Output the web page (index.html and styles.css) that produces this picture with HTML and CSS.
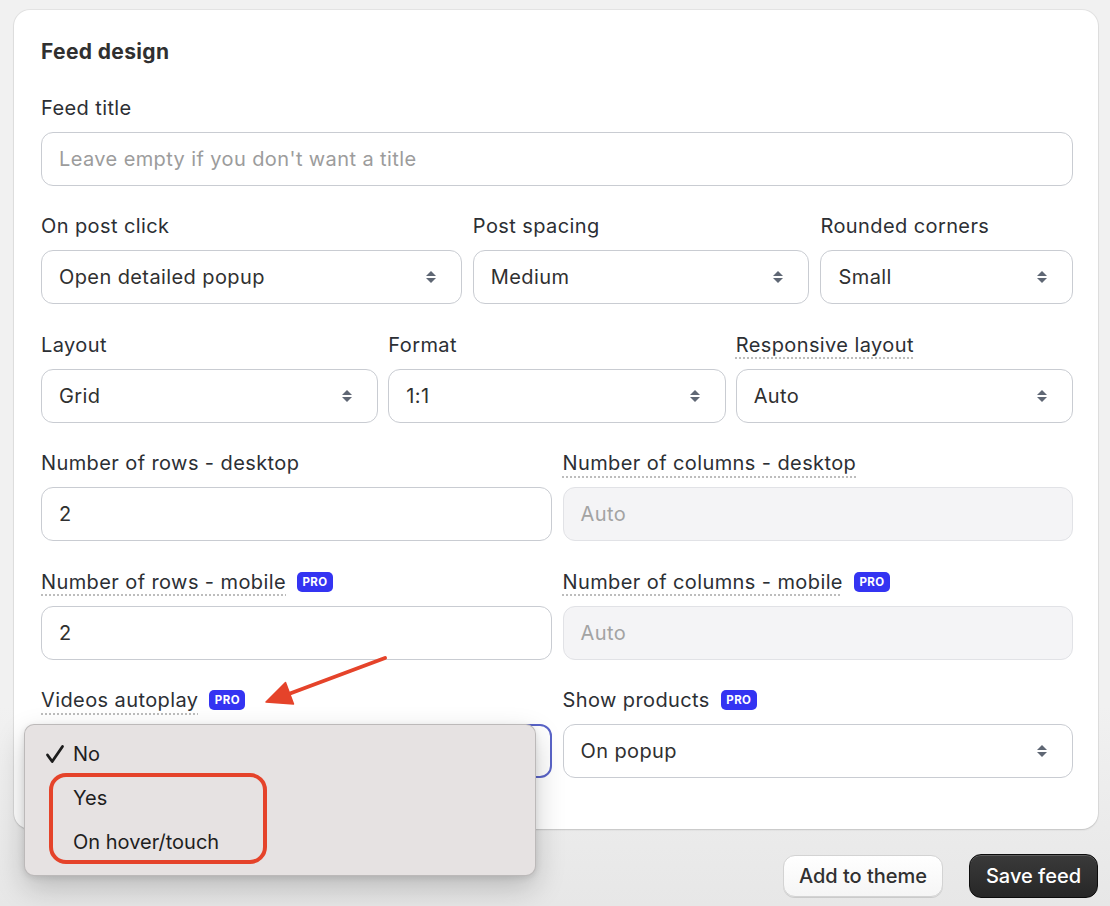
FILE: index.html
```html
<!DOCTYPE html>
<html lang="en">
<head>
<meta charset="utf-8">
<title>Feed design</title>
<link rel="stylesheet" href="styles.css">
</head>
<body>
<div class="page">
  <section class="card">
    <h2 class="card-title">Feed design</h2>

    <div class="field">
      <label class="label"><span class="label-text">Feed title</span></label>
      <div class="input placeholder">Leave empty if you don't want a title</div>
    </div>

    <div class="row row-543">
      <div class="field">
        <label class="label"><span class="label-text">On post click</span></label>
        <div class="input select">Open detailed popup<span class="caret"></span></div>
      </div>
      <div class="field">
        <label class="label"><span class="label-text">Post spacing</span></label>
        <div class="input select">Medium<span class="caret"></span></div>
      </div>
      <div class="field">
        <label class="label"><span class="label-text">Rounded corners</span></label>
        <div class="input select">Small<span class="caret"></span></div>
      </div>
    </div>

    <div class="row row-3">
      <div class="field">
        <label class="label"><span class="label-text">Layout</span></label>
        <div class="input select">Grid<span class="caret"></span></div>
      </div>
      <div class="field">
        <label class="label"><span class="label-text">Format</span></label>
        <div class="input select">1:1<span class="caret"></span></div>
      </div>
      <div class="field">
        <label class="label"><span class="label-text tip">Responsive layout</span></label>
        <div class="input select">Auto<span class="caret"></span></div>
      </div>
    </div>

    <div class="row row-2">
      <div class="field">
        <label class="label"><span class="label-text">Number of rows - desktop</span></label>
        <div class="input">2</div>
      </div>
      <div class="field">
        <label class="label"><span class="label-text tip">Number of columns - desktop</span></label>
        <div class="input disabled">Auto</div>
      </div>
    </div>

    <div class="row row-2">
      <div class="field">
        <label class="label"><span class="label-text tip">Number of rows - mobile</span><span class="pro">PRO</span></label>
        <div class="input">2</div>
      </div>
      <div class="field">
        <label class="label"><span class="label-text tip">Number of columns - mobile</span><span class="pro">PRO</span></label>
        <div class="input disabled">Auto</div>
      </div>
    </div>

    <div class="row row-2">
      <div class="field">
        <label class="label"><span class="label-text tip">Videos autoplay</span><span class="pro">PRO</span></label>
        <div class="input select focused"><span class="caret"></span></div>
      </div>
      <div class="field">
        <label class="label"><span class="label-text">Show products</span><span class="pro">PRO</span></label>
        <div class="input select">On popup<span class="caret"></span></div>
      </div>
    </div>
  </section>

  <div class="actions">
    <button class="btn btn-secondary">Add to theme</button>
    <button class="btn btn-primary">Save feed</button>
  </div>

  <ul class="menu">
    <li class="menu-item checked">
      <svg class="check" viewBox="0 0 20 20" width="20" height="20"><path d="M2.5 11 L7.2 17.5 L17.5 2.5" fill="none" stroke="#1c1c1c" stroke-width="2.8" stroke-linecap="round" stroke-linejoin="round"/></svg>
      <span class="menu-text">No</span>
    </li>
    <li class="menu-item"><span class="menu-text">Yes</span></li>
    <li class="menu-item"><span class="menu-text">On hover/touch</span></li>
  </ul>

  <div class="highlight"></div>

  <svg class="annot-arrow" width="1110" height="906" viewBox="0 0 1110 906">
    <line x1="385" y1="658" x2="290" y2="693.5" stroke="#e5432a" stroke-width="4" stroke-linecap="round"/>
    <polygon points="266,702 285.5,682.5 293.5,704" fill="#e5432a" stroke="#e5432a" stroke-width="1.5" stroke-linejoin="round"/>
  </svg>
</div>
</body>
</html>
```

FILE: styles.css
```css
html, body {
  margin: 0;
  padding: 0;
}

body {
  font-family: "Inter", "Liberation Sans", sans-serif;
  color: #303030;
  background: linear-gradient(180deg, #f1f1f1 0%, #f1f1f1 78%, #e7e7e7 100%);
  width: 1110px;
  height: 906px;
  overflow: hidden;
}

.page {
  position: relative;
  width: 1110px;
  height: 906px;
  padding-top: 10px;
  box-sizing: border-box;
}

.card {
  margin-left: 14px;
  width: 1084px;
  box-sizing: border-box;
  background: #ffffff;
  border-radius: 16px;
  padding: 30px 25px 51px 27px;
  box-shadow: 0 0 0 1px rgba(0, 0, 0, 0.05), 0 1px 2px rgba(0, 0, 0, 0.12);
  display: flex;
  flex-direction: column;
  gap: 28.5px;
}

.card-title {
  margin: 0 0 3px;
  font-size: 21px;
  line-height: 24px;
  font-weight: 650;
  letter-spacing: 0.35px;
  color: #303030;
}

.row {
  display: grid;
  column-gap: 11px;
}

.row-543 {
  grid-template-columns: 5fr 4fr 3fr;
}

.row-3 {
  grid-template-columns: 1fr 1fr 1fr;
  column-gap: 10px;
}

.row-2 {
  grid-template-columns: 1fr 1fr;
}

.field {
  display: flex;
  flex-direction: column;
  gap: 12px;
}

.label {
  display: flex;
  align-items: center;
  gap: 11px;
  height: 24px;
  font-size: 20px;
  line-height: 24px;
  letter-spacing: 0.4px;
  color: #2c2f34;
}

.label-text.tip {
  text-decoration-line: underline;
  text-decoration-style: dotted;
  text-decoration-color: #bdbdbd;
  text-decoration-thickness: 2px;
  text-underline-offset: 6px;
}

.pro {
  display: inline-flex;
  align-items: center;
  justify-content: center;
  width: 36px;
  height: 20px;
  border-radius: 5px;
  background: #3434f2;
  color: #ffffff;
  font-size: 11.5px;
  font-weight: 700;
  letter-spacing: 0.4px;
}

.input {
  position: relative;
  height: 54px;
  box-sizing: border-box;
  border: 1px solid #c9ccd2;
  border-radius: 12px;
  padding: 0 17px;
  display: flex;
  align-items: center;
  font-size: 20px;
  letter-spacing: 0.4px;
  color: #303030;
  background: #ffffff;
}

.placeholder {
  color: #9c9c9c;
}

.disabled {
  background: #f4f4f6;
  border-color: #e1e2e6;
  color: #a3a3a3;
}

.focused {
  border: 2px solid #5a64c8;
  padding-left: 16px;
}

.caret {
  position: absolute;
  right: 25px;
  top: 50%;
  width: 10px;
  height: 14px;
  margin-top: -7px;
}

.caret::before,
.caret::after {
  content: "";
  position: absolute;
  left: 0;
  border-left: 5px solid transparent;
  border-right: 5px solid transparent;
}

.caret::before {
  top: 1px;
  border-bottom: 5px solid #5f6774;
}

.caret::after {
  bottom: 1px;
  border-top: 5px solid #5f6774;
}

.actions {
  display: flex;
  justify-content: flex-end;
  gap: 26px;
  margin-top: 25px;
  padding-right: 12px;
}

.btn {
  font-family: "Inter", "Liberation Sans", sans-serif;
  font-size: 20px;
  font-weight: 500;
  letter-spacing: 0;
  height: 44px;
  border-radius: 12px;
  padding: 0 12px;
  box-sizing: border-box;
  cursor: pointer;
}

.btn-secondary {
  width: 160px;
  margin-top: 1px;
  height: 42px;
  color: #303030;
  background: linear-gradient(180deg, #ffffff 0%, #f5f5f5 100%);
  border: 1px solid #d3d3d3;
  box-shadow: 0 1px 0 rgba(0, 0, 0, 0.12);
}

.btn-primary {
  width: 129px;
  color: #ffffff;
  background: linear-gradient(180deg, #3a3a3a 0%, #272727 100%);
  border: 1.5px solid #0c0c0c;
  box-shadow: inset 0 1px 0 rgba(255, 255, 255, 0.18);
}

.menu {
  position: absolute;
  left: 24px;
  top: 724px;
  width: 512px;
  height: 152px;
  box-sizing: border-box;
  margin: 0;
  padding: 7px 0 0;
  list-style: none;
  background: #e6e2e2;
  border-radius: 10px;
  border: 0.5px solid rgba(0, 0, 0, 0.18);
  box-shadow: 0 12px 30px rgba(0, 0, 0, 0.2), 0 2px 6px rgba(0, 0, 0, 0.1);
}

.menu-item {
  position: relative;
  height: 44px;
  display: flex;
  align-items: center;
  padding-left: 48px;
  font-size: 20px;
  color: #1e1e1e;
}

.check {
  position: absolute;
  left: 20px;
  top: 12px;
}

.highlight {
  position: absolute;
  left: 49px;
  top: 773px;
  width: 218px;
  height: 91px;
  box-sizing: border-box;
  border: 4px solid #e5432a;
  border-radius: 17px;
}

.annot-arrow {
  position: absolute;
  left: 0;
  top: 0;
  pointer-events: none;
}
```
